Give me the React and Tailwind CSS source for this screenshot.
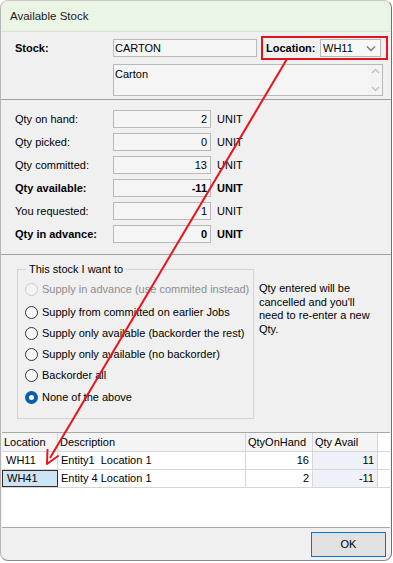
import React from "react";

const F = { fontFamily: '"Liberation Sans", Arial, sans-serif' };

function QtyRow({ label, value, bold }) {
  return (
    <div className="flex items-center h-[18px]">
      <div className={`w-[98px] text-[11px] text-black ${bold ? "font-bold" : ""}`}>{label}</div>
      <div className={`w-[98px] h-[18px] border border-[#b9b9b9] bg-[#f5f5f5] flex items-center justify-end pr-[3px] text-[11px] ${bold ? "font-bold" : ""}`}>
        {value}
      </div>
      <div className={`ml-[6px] text-[11px] ${bold ? "font-bold" : ""}`}>UNIT</div>
    </div>
  );
}

function Radio({ label, disabled, checked, className = "" }) {
  return (
    <div className={`flex items-center h-[21px] ${className}`}>
      {checked ? (
        <div className="w-[13px] h-[13px] rounded-full bg-[#0b5cad] flex items-center justify-center">
          <div className="w-[5px] h-[5px] rounded-full bg-white" />
        </div>
      ) : (
        <div className={`w-[13px] h-[13px] rounded-full border ${disabled ? "border-[#cdcdcd] bg-[#f4f4f4]" : "border-[#333333] bg-[#f8f8f8]"}`} />
      )}
      <span className={`ml-[4px] text-[11px] whitespace-nowrap ${disabled ? "text-[#8d8d8d]" : "text-black"}`}>{label}</span>
    </div>
  );
}

export default function App() {
  return (
    <div className="w-[393px] h-[563px] bg-white relative overflow-hidden" style={F}>
      <div className="w-[392px] h-[561px] bg-[#f0f0f0] border-l border-r border-b border-t border-l-[#b5b5b5] border-r-[#707070] border-t-[#c8c8c8] border-b-[#8a8a8a] rounded-t-[8px] rounded-b-[8px] overflow-hidden flex flex-col">
        {/* Title bar */}
        <div className="h-[31px] bg-[#ebf5e6] flex items-center pl-[9px] pt-[1px] text-[11.5px] text-[#1a1a1a] border-b border-[#dcdcdc] shrink-0">
          Available Stock
        </div>

        {/* Stock section */}
        <div className="pt-[4px] pb-[3px] border-b border-[#a0a0a0] shrink-0">
          <div className="flex items-center h-[24px]">
            <div className="w-[98px] ml-[14px] text-[11px] font-bold">Stock:</div>
            <div className="w-[144px] h-[18px] border border-[#b9b9b9] bg-[#f5f5f5] flex items-center pl-[1px] text-[11px]">CARTON</div>
            <div className="ml-[4px] w-[127px] h-[24px] border-2 border-[#e0161e] flex items-center pl-[3px]">
              <div className="text-[11px] font-bold w-[54px]">Location:</div>
              <div className="w-[61px] h-[18px] border border-[#b9b9b9] bg-[#f7f7f7] flex items-center justify-between pl-[2px] pr-[4px] text-[11px]">
                <span>WH11</span>
                <svg width="10" height="7" viewBox="0 0 10 7">
                  <path d="M1 1.5 L5 5.5 L9 1.5" stroke="#7a7a7a" strokeWidth="1.4" fill="none" />
                </svg>
              </div>
            </div>
          </div>
          <div className="ml-[112px] mt-[4px] w-[270px] h-[32px] border border-[#b9b9b9] bg-[#f5f5f5] flex">
            <div className="flex-1 pl-[1px] pt-[1px] text-[11px]">Carton</div>
            <div className="w-[14px] flex flex-col items-center justify-between py-[3px] bg-[#f3f3f3]">
              <svg width="9" height="6" viewBox="0 0 9 6">
                <path d="M1 5 L4.5 1.5 L8 5" stroke="#c2c2c2" strokeWidth="1.3" fill="none" />
              </svg>
              <svg width="9" height="6" viewBox="0 0 9 6">
                <path d="M1 1 L4.5 4.5 L8 1" stroke="#c2c2c2" strokeWidth="1.3" fill="none" />
              </svg>
            </div>
          </div>
        </div>

        {/* Qty section */}
        <div className="pt-[10px] pb-[11px] pl-[14px] flex flex-col gap-[5px] border-b border-[#a0a0a0] shrink-0">
          <QtyRow label="Qty on hand:" value="2" />
          <QtyRow label="Qty picked:" value="0" />
          <QtyRow label="Qty committed:" value="13" />
          <QtyRow label="Qty available:" value="-11" bold />
          <QtyRow label="You requested:" value="1" />
          <QtyRow label="Qty in advance:" value="0" bold />
        </div>

        {/* Options section */}
        <div className="pt-[14px] pb-[13px] flex shrink-0">
          <div className="relative ml-[16px] w-[237px] h-[150px] border border-[#d4d4d4] pl-[7px] pt-[9px]">
            <span className="absolute -top-[8px] left-[8px] px-[3px] bg-[#f0f0f0] text-[11px] leading-[14px]">This stock I want to</span>
            <Radio label="Supply in advance (use commited instead)" disabled />
            <Radio label="Supply from committed on earlier Jobs" className="mt-[2px]" />
            <Radio label="Supply only available (backorder the rest)" />
            <Radio label="Supply only available (no backorder)" />
            <Radio label="Backorder all" />
            <Radio label="None of the above" className="mt-[1px]" checked />
          </div>
          <div className="ml-[5px] mt-[13px] w-[118px] text-[11px] leading-[13.7px]">
            Qty entered will be cancelled and you'll need to re-enter a new Qty.
          </div>
        </div>

        {/* Grid */}
        <div className="h-[96px] bg-white border-t border-b border-[#a8a8a8] ml-[1px] mr-[1px] shrink-0 text-[11px]">
          <div className="flex h-[19px] border-b border-[#d6d6d6]">
            <div className="w-[56px] bg-[#f4f4f4] border-r border-[#d6d6d6] flex items-center pl-[2px]">Location</div>
            <div className="w-[188px] bg-[#f4f4f4] border-r border-[#d6d6d6] flex items-center pl-[2px]">Description</div>
            <div className="w-[67px] bg-[#f4f4f4] border-r border-[#d6d6d6] flex items-center pl-[2px]">QtyOnHand</div>
            <div className="w-[65px] bg-[#f4f4f4] border-r border-[#d6d6d6] flex items-center pl-[2px]">Qty Avail</div>
          </div>
          <div className="flex h-[18px] border-b border-[#d6d6d6]">
            <div className="w-[56px] border-r border-[#d6d6d6] flex items-center pl-[4px]">WH11</div>
            <div className="w-[188px] border-r border-[#d6d6d6] flex items-center pl-[3px]">Entity1&nbsp; Location 1</div>
            <div className="w-[67px] border-r border-[#d6d6d6] flex items-center justify-end pr-[3px]">16</div>
            <div className="w-[65px] bg-[#eef2f8] border-r border-[#d6d6d6] flex items-center justify-end pr-[3px]">11</div>
          </div>
          <div className="flex h-[18px] border-b border-[#d6d6d6]">
            <div className="w-[56px] border border-[#3a2a20] bg-[#cce4f7] flex items-center pl-[4px]">WH41</div>
            <div className="w-[188px] border-r border-[#d6d6d6] flex items-center pl-[3px]">Entity 4 Location 1</div>
            <div className="w-[67px] border-r border-[#d6d6d6] flex items-center justify-end pr-[3px]">2</div>
            <div className="w-[65px] bg-[#eef2f8] border-r border-[#d6d6d6] flex items-center justify-end pr-[3px]">-11</div>
          </div>
        </div>

        {/* Footer */}
        <div className="flex-1 flex justify-end items-start pt-[4px] pr-[5px]">
          <button className="w-[75px] h-[25px] border border-[#0078d7] bg-[#e1e1e1] text-[11px] flex items-center justify-center">OK</button>
        </div>
      </div>

      {/* Red arrow annotation overlay */}
      <svg className="absolute left-0 top-0 pointer-events-none" width="393" height="563">
        <line x1="287" y1="59" x2="50" y2="458" stroke="#e8141c" strokeWidth="2" />
        <path d="M47 464 L47.5 450 M47 464 L58 456" stroke="#e8141c" strokeWidth="2" fill="none" strokeLinecap="round" />
      </svg>
    </div>
  );
}
